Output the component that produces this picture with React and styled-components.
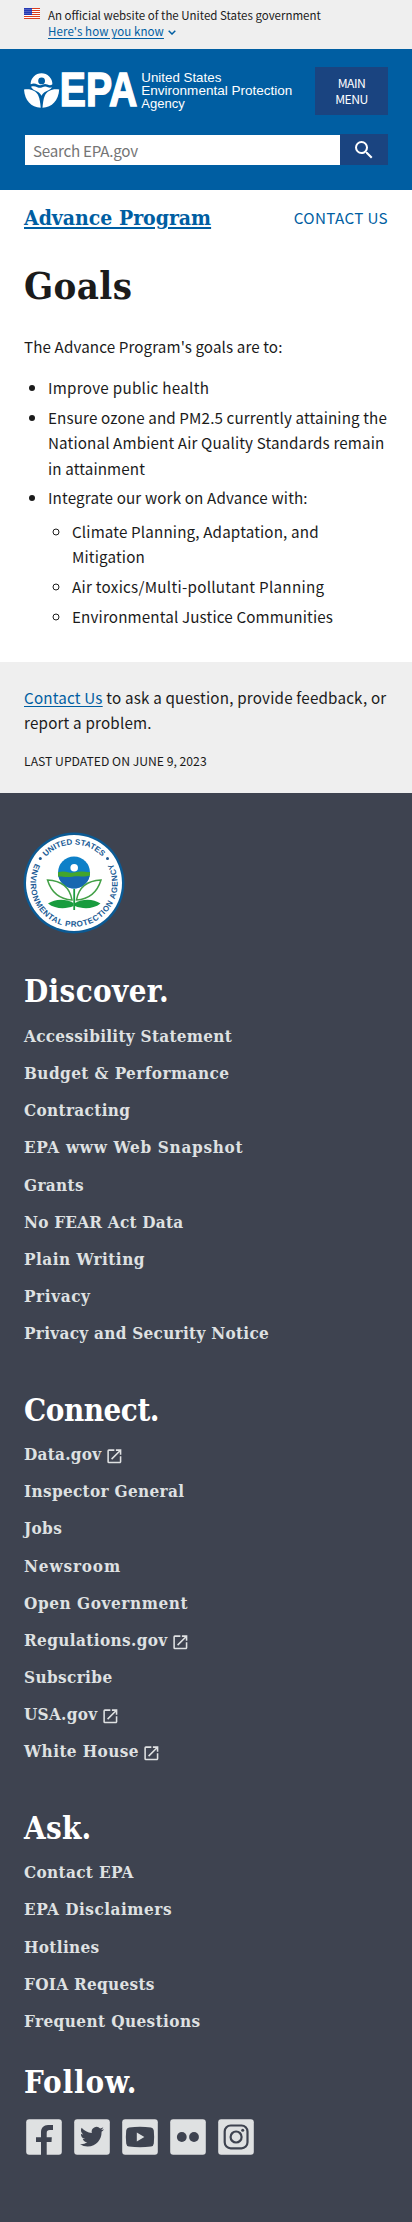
import React from "react";
import styled, { createGlobalStyle } from "styled-components";
import { MdLaunch, MdSearch } from "react-icons/md";

const sans = '"Noto Sans CJK SC", "Noto Sans", sans-serif';
const serif = '"DejaVu Serif Condensed", "DejaVu Serif", serif';

const color = {
  ink: "#1b1b1b",
  link: "#005ea2",
  navy: "#1a4480",
  pale: "#efefef",
  footer: "#3e4350",
  footerLink: "#dfe1e2",
};

const GlobalStyle = createGlobalStyle`
  *, *::before, *::after { box-sizing: border-box; }
  body {
    margin: 0;
    background: #fff;
    color: ${color.ink};
    font-family: ${sans};
    font-size: 15.2px;
    line-height: 25.44px;
  }
  ul { margin: 0; padding: 0; }
`;

const Page = styled.div`
  display: flex;
  flex-direction: column;
  min-height: 2222px;
`;

/* Government banner */

const Banner = styled.div`
  display: flex;
  gap: 8px;
  height: 49px;
  padding: 7px 24px 0;
  background: ${color.pale};
  font-size: 11.5px;
  line-height: 16px;
  white-space: nowrap;
`;

const Flag = styled.svg`
  display: block;
  width: 16px;
  height: 11px;
  margin-top: 1px;
`;

const BannerLink = styled.a`
  display: flex;
  align-items: center;
  gap: 4px;
  color: ${color.link};
  letter-spacing: 0.1px;

  span { text-decoration: underline; text-underline-offset: 2px; }
`;

const Chevron = styled.svg`
  width: 8px;
  height: 5px;
  margin-top: 2px;
`;

/* Masthead */

const Masthead = styled.header`
  display: flex;
  flex-direction: column;
  gap: 19px;
  height: 141px;
  padding: 18px 24px 0;
  background: ${color.link};
`;

const MastheadTop = styled.div`
  display: flex;
  justify-content: space-between;
  height: 48px;
`;

const Logo = styled.svg`
  display: block;
  width: 270px;
  height: 56px;
  margin-top: -4px;
`;

const MenuButton = styled.button`
  width: 73px;
  height: 48px;
  padding: 0 16px;
  border: 0;
  background: ${color.navy};
  color: #fff;
  font-family: ${sans};
  font-size: 12.2px;
  line-height: 16px;
  letter-spacing: -0.5px;
`;

const SearchForm = styled.form`
  display: flex;
  height: 31px;
`;

const SearchInput = styled.input`
  flex: 1;
  min-width: 0;
  margin: 1px 0 0 1px;
  padding: 0 8px 1px;
  border: 0;
  border-radius: 0;
  background: #fff;
  font-family: ${sans};
  font-size: 15.2px;
  letter-spacing: -0.25px;

  &::placeholder { color: #757575; opacity: 1; }
`;

const SearchButton = styled.button`
  display: grid;
  place-items: center;
  width: 48px;
  padding: 0;
  border: 0;
  background: ${color.navy};
  color: #fff;
`;

/* Article */

const Main = styled.main`
  height: 472px;
  padding: 12px 24px 0;
`;

const ProgramBar = styled.div`
  display: flex;
  justify-content: space-between;
  line-height: 30px;
`;

const ProgramLink = styled.a`
  margin-top: 1px;
  color: ${color.link};
  font-family: ${serif};
  font-size: 21px;
  font-weight: 700;
  text-decoration: underline;
  text-decoration-thickness: 2px;
  text-underline-offset: 2px;
`;

const ContactLink = styled.a`
  color: ${color.link};
  letter-spacing: 0.36px;
`;

const Title = styled.h1`
  margin: 30px 0 25px;
  font-family: ${serif};
  font-size: 38px;
  line-height: 46px;
  letter-spacing: 0.4px;
`;

const Intro = styled.p`
  margin: 0 0 15.7px;
  letter-spacing: 0.11px;
`;

const Bullets = styled.ul`
  padding-left: 24px;
  margin-top: ${(p) => (p.$nested ? "8.2px" : 0)};
  list-style: ${(p) => (p.$nested ? "circle" : "disc")};
`;

const Bullet = styled.li`
  margin-bottom: 4.2px;
  letter-spacing: ${(p) => p.$spacing ?? 0.15}px;
`;

const PageInfo = styled.section`
  height: 131px;
  padding: 23px 24px 0;
  background: ${color.pale};
`;

const Feedback = styled.p`
  margin: 0 -10px 15px 0;
  letter-spacing: 0.19px;

  a { color: ${color.link}; text-decoration: underline; text-underline-offset: 2px; }
`;

const Updated = styled.p`
  margin: 0;
  font-size: 12.2px;
  line-height: 20px;
`;

/* Footer */

const Footer = styled.footer`
  flex: 1;
  padding: 39px 24px 0 23px;
  background: ${color.footer};
  color: #fff;
`;

const SealImage = styled.svg`
  display: block;
  width: 102px;
  height: 102px;
`;

const FooterHeading = styled.h2`
  margin: ${(p) => p.$top}px 0 ${(p) => p.$bottom}px 1px;
  font-family: ${serif};
  font-size: 31px;
  line-height: 40px;
  letter-spacing: ${(p) => p.$spacing}px;
`;

const FooterList = styled.ul`
  padding-left: 1px;
  list-style: none;
`;

const FooterLink = styled.a`
  display: flex;
  align-items: center;
  gap: 3.5px;
  height: 37.1px;
  color: ${color.footerLink};
  font-family: ${serif};
  font-size: 17px;
  font-weight: 700;
  letter-spacing: ${(p) => p.$spacing}px;
`;

const ExternalIcon = styled(MdLaunch)`
  margin-top: 3px;
`;

const SocialRow = styled.div`
  display: flex;
  gap: 12px;
  margin: 17px 0 0 3px;
`;

const SocialIcon = styled.svg`
  display: block;
  width: 36px;
  height: 36px;
  color: ${color.footer};
`;

const footerGroups = [
  {
    title: "Discover.", top: 37, bottom: 7.3, spacing: 0.4,
    links: [
      { label: "Accessibility Statement", spacing: 0.28 },
      { label: "Budget & Performance", spacing: 0.44 },
      { label: "Contracting" },
      { label: "EPA www Web Snapshot", spacing: 0.7 },
      { label: "Grants" },
      { label: "No FEAR Act Data", spacing: 0.24 },
      { label: "Plain Writing", spacing: 0.5 },
      { label: "Privacy", spacing: 0.6 },
      { label: "Privacy and Security Notice", spacing: 0.29 },
    ],
  },
  {
    title: "Connect.", top: 37.4, bottom: 6.9, spacing: -0.45,
    links: [
      { label: "Data.gov", spacing: 0.28, external: true },
      { label: "Inspector General", spacing: 0.33 },
      { label: "Jobs" },
      { label: "Newsroom", spacing: 0.85 },
      { label: "Open Government", spacing: 0.58 },
      { label: "Regulations.gov", spacing: 0.38, external: true },
      { label: "Subscribe", spacing: 0.38 },
      { label: "USA.gov", spacing: 0.28, external: true },
      { label: "White House", spacing: 0.42, external: true },
    ],
  },
  {
    title: "Ask.", top: 38, bottom: 6.3, spacing: 0.3,
    links: [
      { label: "Contact EPA" },
      { label: "EPA Disclaimers", spacing: 0.52 },
      { label: "Hotlines" },
      { label: "FOIA Requests", spacing: 0.3 },
      { label: "Frequent Questions", spacing: 0.42 },
    ],
  },
];

function UsFlag() {
  return (
    <Flag viewBox="0 0 16 11" aria-label="U.S. flag">
      <rect width="16" height="11" fill="#fff" />
      {[0, 2, 4, 6, 8, 10].map((y) => (
        <rect key={y} y={y} width="16" height="1" fill="#db3e1f" />
      ))}
      <rect width="8" height="7" fill="#1e33b1" />
      {[1, 3, 5].map((y) =>
        [1, 3, 5, 7].map((x) => <circle key={`${x}-${y}`} cx={x} cy={y + 0.3} r="0.45" fill="#fff" />)
      )}
    </Flag>
  );
}

function EpaLogo() {
  return (
    <Logo viewBox="0 -8 270 56" fill="#fff" aria-label="US EPA">
      <path d="M6.6 13.2a10.9 10.9 0 0 1 21.8 0c-1.5 1.4-3.2 1.2-5 .3-1.7-.8-3-.8-4.6 0-1.8.9-3.6.9-5.4 0-2.3-1.1-4.3-1.2-6.8-.3z" />
      <circle cx="17.6" cy="9.9" r="3.4" fill="#005ea2" />
      <path d="M7 15.8c2.3-.8 4.2-.5 6.3.4 1.8.8 3.3.8 5 0 2-.9 3.8-.9 5.6 0 1.4.6 2.6.6 4 .1-1.1 1.7-2.5 2.7-4 3.3-2.9 1-5.1 2.9-6.4 5.1-1.3-2.2-3.5-4.1-6.4-5.1-1.6-.7-3.1-1.9-4.1-3.8z" />
      <path d="M0 18.6c6.5-1.2 12.2 1.2 14.4 6.2 1.4 3.2 1.9 7.4 2.3 12C7 36.5.8 29.5 0 18.6z" />
      <path d="M35.2 18.6c-6.5-1.2-12.2 1.2-14.4 6.2-1.4 3.2-1.9 7.4-2.3 12 9.7-.3 15.900-7.3 16.700-18.200z" />
      <text
        x="35.8"
        y="35.3"
        textLength="77.6"
        lengthAdjust="spacingAndGlyphs"
        fontFamily="Liberation Sans, Arial, sans-serif"
        fontWeight="700"
        fontSize="47.5"
        stroke="#fff"
        strokeWidth="1.5"
      >
        EPA
      </text>
      <g fontFamily="Liberation Sans, Arial, sans-serif" fontSize="12.4">
        <text x="117.3" y="11.4" textLength="80" lengthAdjust="spacingAndGlyphs">United States</text>
        <text x="117.3" y="24.1" textLength="151" lengthAdjust="spacingAndGlyphs">Environmental Protection</text>
        <text x="117.3" y="36.8" textLength="43.5" lengthAdjust="spacingAndGlyphs">Agency</text>
      </g>
    </Logo>
  );
}

function Seal() {
  const ink = "#205a94";
  return (
    <SealImage viewBox="-1 -1 102 102" aria-label="EPA seal">
      <defs>
        <path id="seal-top" d="M11.500 50a38.500 38.500 0 0 1 77 0" />
        <path id="seal-bottom" d="M14.300 25.500A43.500 43.500 0 1 0 85.700 25.500" />
      </defs>
      <circle cx="50" cy="50" r="50.4" fill="#0b5a94" />
      <circle cx="50" cy="50" r="48" fill="#fff" />
      <g fontFamily="Liberation Sans, Arial, sans-serif" fontWeight="700" fontSize="8" fill={ink}>
        <text textAnchor="middle">
          <textPath href="#seal-top" startOffset="50%" textLength="63">UNITED STATES</textPath>
        </text>
        <text textAnchor="middle">
          <textPath href="#seal-bottom" startOffset="50%" textLength="178">ENVIRONMENTAL PROTECTION AGENCY</textPath>
        </text>
      </g>
      <circle cx="16.3" cy="25.5" r="1.5" fill={ink} />
      <circle cx="83.5" cy="25.5" r="1.5" fill={ink} />
      <circle cx="50" cy="39.5" r="16" fill="#0e80c8" />
      <path d="M34.4 43h31.2a16 16 0 0 1-31.2 0z" fill="#1767b0" />
      <path d="M34 39.2c4-1.2 7-.8 11 .2 5 1 9-1.2 13-.8 3 .2 5.500.8 8 .4v3.500c-4 1.200-7 1.300-11 .8-4-.6-8 .8-12 .6-4 0-6.500-.8-9-.4z" fill="#43a52c" />
      <circle cx="50.2" cy="34.8" r="3.8" fill="#fff" />
      <g fill="#fff" stroke="#43a047" strokeWidth="1.5">
        <path d="M23.5 47c12 .5 22 6 24.500 20-12-.8-20.500-7-24.500-20z" />
        <path d="M77 47c-12 .5-22 6-24.500 20 12-.8 20.500-7 24.500-20z" />
      </g>
      <g fill="#189c3e">
        <path d="M24 70.5c7-5 18-5 25.500-.5v3c-7 3-18 3.500-25.500-2.500z" />
        <path d="M76.5 70.5c-7-5-18-5-25.500-.5v3c7 3 18 3.500 25.500-2.500z" />
        <path d="M49.3 56h1.800v21h-1.800z" />
      </g>
    </SealImage>
  );
}

const socialGlyphs = {
  Facebook: <path fill="currentColor" d="M15 36.5V23h-5v-4.700h5v-4.800C15 8.800 17.800 6 22 6h5v5.100h-3.300c-1.900 0-3 .9-3 2.900v4.300h5.100l-.3 4.700h-4.800v13.500z" />,
  Twitter: <path fill="currentColor" transform="translate(6 5.7)" d="M23.953 4.57a10 10 0 01-2.825.775 4.958 4.958 0 002.163-2.723c-.951.555-2.005.959-3.127 1.184a4.92 4.92 0 00-8.384 4.482C7.69 8.095 4.067 6.13 1.64 3.162a4.822 4.822 0 00-.666 2.475c0 1.71.87 3.213 2.188 4.096a4.904 4.904 0 01-2.228-.616v.06a4.923 4.923 0 003.946 4.827 4.996 4.996 0 01-2.212.085 4.936 4.936 0 004.604 3.417 9.867 9.867 0 01-6.102 2.105c-.39 0-.779-.023-1.17-.067a13.995 13.995 0 007.557 2.209c9.053 0 13.998-7.496 13.998-13.985 0-.21 0-.42-.015-.63A9.935 9.935 0 0024 4.59z" />,
  YouTube: (
    <>
      <path fill="currentColor" d="M7 8.5Q18 7 29 8.500Q31.500 8.800 31.800 11.500Q32.500 18 31.800 24.500Q31.500 27.300 29 27.600Q18 29 7 27.600Q4.500 27.300 4.200 24.500Q3.500 18 4.200 11.500Q4.500 8.800 7 8.500z" />
      <path fill={color.footerLink} d="M14.8 13.4v9.200l7.600-4.600z" />
    </>
  ),
  Flickr: (
    <g fill="currentColor">
      <circle cx="11.8" cy="18" r="4.9" />
      <circle cx="24" cy="18" r="4.9" />
    </g>
  ),
  Instagram: (
    <g fill="none" stroke="currentColor" strokeWidth="2.2">
      <rect x="6.7" y="6.5" width="22.8" height="22.8" rx="6" />
      <circle cx="18.1" cy="18" r="5.5" />
      <circle cx="24.7" cy="11.3" r="1.5" fill="currentColor" stroke="none" />
    </g>
  ),
};

function Social({ name }) {
  return (
    <SocialIcon viewBox="0 0 36 36" aria-label={name}>
      <rect x="0.2" y="0.2" width="35.6" height="35.6" rx="3" fill={color.footerLink} />
      {socialGlyphs[name]}
    </SocialIcon>
  );
}

export default function App() {
  return (
    <>
      <GlobalStyle />
      <Page>
        <Banner>
          <UsFlag />
          <div>
            <div>An official website of the United States government</div>
            <BannerLink>
              <span>Here's how you know</span>
              <Chevron viewBox="0 0 8 5" fill="none" stroke="currentColor" strokeWidth="1.5">
                <path d="M0.7 0.8L4 4L7.3 0.8" />
              </Chevron>
            </BannerLink>
          </div>
        </Banner>

        <Masthead>
          <MastheadTop>
            <EpaLogo />
            <MenuButton>MAIN MENU</MenuButton>
          </MastheadTop>
          <SearchForm>
            <SearchInput placeholder="Search EPA.gov" />
            <SearchButton type="button" aria-label="Search">
              <MdSearch size={24} />
            </SearchButton>
          </SearchForm>
        </Masthead>

        <Main>
          <ProgramBar>
            <ProgramLink>Advance Program</ProgramLink>
            <ContactLink>CONTACT US</ContactLink>
          </ProgramBar>
          <Title>Goals</Title>
          <Intro>The Advance Program's goals are to:</Intro>
          <Bullets>
            <Bullet $spacing={0.28}>Improve public health</Bullet>
            <Bullet $spacing={0.13}>
              Ensure ozone and PM2.5 currently attaining the National Ambient Air Quality Standards remain in attainment
            </Bullet>
            <Bullet>
              Integrate our work on Advance with:
              <Bullets $nested>
                <Bullet>
                  Climate Planning, Adaptation, and
                  <br />
                  Mitigation
                </Bullet>
                <Bullet $spacing={0.28}>Air toxics/Multi-pollutant Planning</Bullet>
                <Bullet>Environmental Justice Communities</Bullet>
              </Bullets>
            </Bullet>
          </Bullets>
        </Main>

        <PageInfo>
          <Feedback>
            <a>Contact Us</a> to ask a question, provide feedback, or
            <br />
            report a problem.
          </Feedback>
          <Updated>LAST UPDATED ON JUNE 9, 2023</Updated>
        </PageInfo>

        <Footer>
          <Seal />
          {footerGroups.map((group) => (
            <React.Fragment key={group.title}>
              <FooterHeading $top={group.top} $bottom={group.bottom} $spacing={group.spacing}>
                {group.title}
              </FooterHeading>
              <FooterList>
                {group.links.map(({ label, spacing = 0.34, external }) => (
                  <li key={label}>
                    <FooterLink $spacing={spacing}>
                      {label}
                      {external && <ExternalIcon size={18.7} />}
                    </FooterLink>
                  </li>
                ))}
              </FooterList>
            </React.Fragment>
          ))}
          <FooterHeading $top={22} $bottom={0} $spacing={0.9}>Follow.</FooterHeading>
          <SocialRow>
            {Object.keys(socialGlyphs).map((name) => (
              <Social key={name} name={name} />
            ))}
          </SocialRow>
        </Footer>
      </Page>
    </>
  );
}
